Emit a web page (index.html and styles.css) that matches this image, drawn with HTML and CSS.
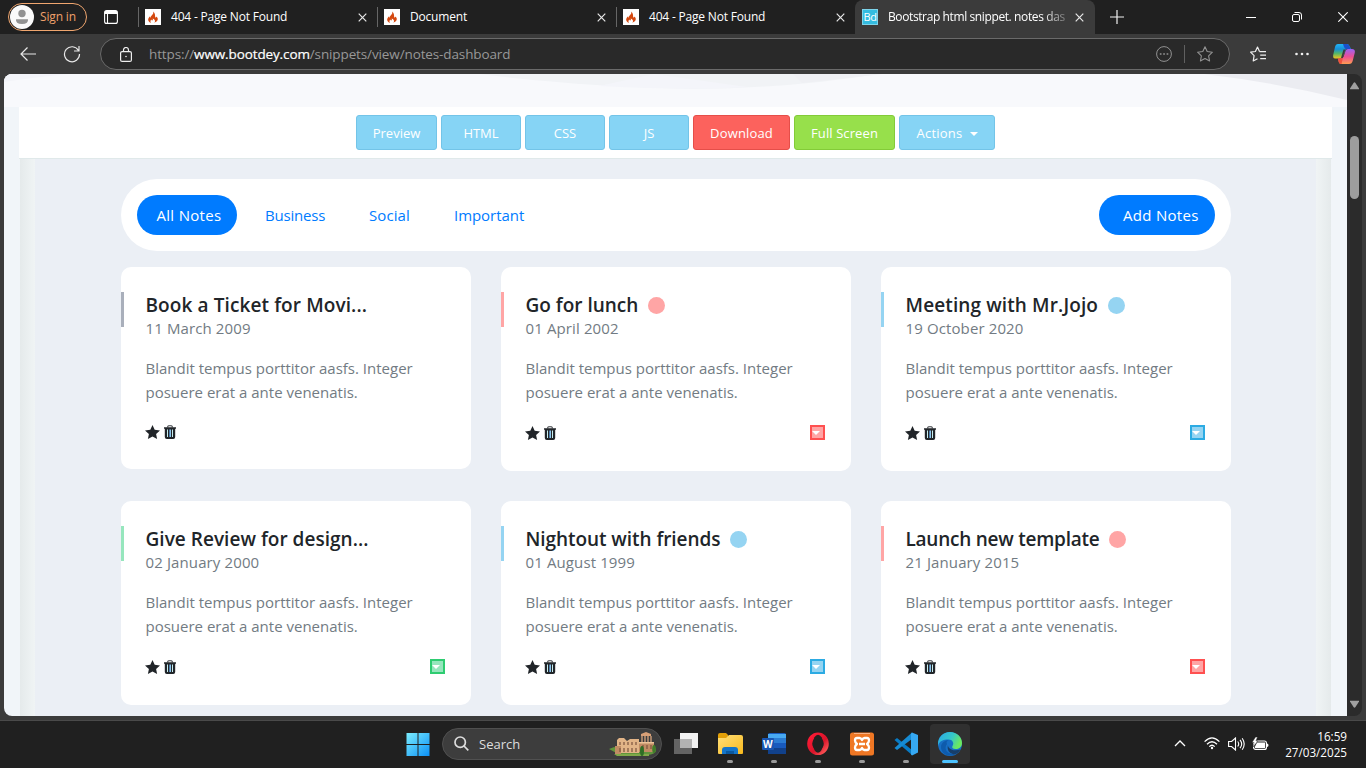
FILE: index.html
```
<!DOCTYPE html>
<html lang="en">
<head>
<meta charset="utf-8">
<title>Notes dashboard</title>
<link rel="stylesheet" href="styles.css">
</head>
<body>
<svg width="0" height="0" class="defs">
  <defs>
    <linearGradient id="winG" gradientUnits="userSpaceOnUse" x1="0" y1="0" x2="24" y2="24"><stop offset="0" stop-color="#7ff0ff"/><stop offset="1" stop-color="#0a8ff5"/></linearGradient>
    <linearGradient id="copA" x1="0" y1="0" x2="0" y2="1"><stop offset="0" stop-color="#23b5f5"/><stop offset=".35" stop-color="#168fd8"/><stop offset=".65" stop-color="#54b768"/><stop offset="1" stop-color="#f2c51d"/></linearGradient>
    <linearGradient id="copB" x1="0" y1="0" x2="0" y2="1"><stop offset="0" stop-color="#9a63f4"/><stop offset=".5" stop-color="#ea4e96"/><stop offset="1" stop-color="#ff9c50"/></linearGradient>
    <linearGradient id="edgeA" x1="0" y1="0" x2="1" y2=".4"><stop offset="0" stop-color="#2aa8e8"/><stop offset=".6" stop-color="#35c8c8"/><stop offset="1" stop-color="#6be860"/></linearGradient>
    <linearGradient id="operaG" x1="0" y1="0" x2="1" y2="1"><stop offset="0" stop-color="#ff1b36"/><stop offset=".6" stop-color="#d9142a"/><stop offset="1" stop-color="#ff5a5a"/></linearGradient>
    <linearGradient id="foldG" x1="0" y1="0" x2="1" y2="1"><stop offset="0" stop-color="#ffe07a"/><stop offset="1" stop-color="#f9b91c"/></linearGradient>
    <symbol id="flame" viewBox="0 0 16 16"><rect width="16" height="16" fill="#fff"/><path d="M8.200 2.500c.5 1.700-.3 2.700-1.500 3.900-.8.800-1 1.500-.7 2.300-.6-.2-.9-.8-.8-1.500C4 8.200 3 9.400 3.200 10.900c.2 1.400 1.300 2.400 2.800 2.800-.9-1.200-.7-2.400.5-3.200 0 1 .6 1.200 1 .8.600-.5.400-1.300.2-1.900 1.500.6 2.500 1.500 2.300 2.800 0 .6-.3 1.100-.8 1.500 2.200-.4 3.600-1.800 3.600-3.600 0-1.300-.8-2.200-1.600-2.700.1.700-.2 1.200-.7 1.200C9.700 8.300 11 5.200 8.200 2.500Z" fill="#d4480f"/></symbol>
    <symbol id="close" viewBox="0 0 9 9"><path d="M.7.7l7.600 7.600M8.300.7L.7 8.300" stroke="#e8e8e8" stroke-width="1.200" fill="none"/></symbol>
    <symbol id="star" viewBox="0 0 15 14"><path d="M7.500 0l2.200 4.700 5.300.7-3.900 3.500 1 5.100-4.600-2.500L2.900 14l1-5.100L0 5.400l5.300-.7Z" fill="#212529"/></symbol>
    <symbol id="trash" viewBox="0 0 12 14"><path d="M3.700 2.500V1.700Q3.700.7 4.700.7h2.600q1 0 1 1v.8" fill="none" stroke="#3b3f43" stroke-width="1.100"/><path d="M0 2.300h12v1.400h-.8V12q0 2-2 2H2.800q-2 0-2-2V3.700H0Z" fill="#212529"/><path d="M3.500 4.500v7.500M8.500 4.500v7.500" stroke="#c7eef0"/><path d="M5.500 4.500v7.500" stroke="#4d7fae"/><path d="M6.500 4.500v7.500" stroke="#8bc4ec"/></symbol>
  </defs>
</svg>

<div class="tabstrip">
  <div class="signin"><svg width="24" height="24" viewBox="0 0 24 24"><circle cx="12" cy="12" r="12" fill="#fafafa"/><circle cx="12" cy="8.500" r="3.700" fill="#929292"/><path d="M6 14.200h12q.7 4.700-6 4.700t-6-4.700Z" fill="#929292"/></svg><span>Sign in</span></div>
  <svg class="workspace" width="14" height="14" viewBox="0 0 14 14" fill="none" stroke="#fff" stroke-width="1.100"><rect x=".6" y=".6" width="12.800" height="12.800" rx="2"/><path d="M.6 3.400h12.800M3.500 3.400v10"/><path d="M1 2h12" stroke-width="2"/></svg>
  <div class="tab"><svg width="16" height="16"><use href="#flame"/></svg><span class="tab-name">404 - Page Not Found</span><svg width="9" height="9"><use href="#close"/></svg></div>
  <div class="tab"><svg width="16" height="16"><use href="#flame"/></svg><span class="tab-name">Document</span><svg width="9" height="9"><use href="#close"/></svg></div>
  <div class="tab"><svg width="16" height="16"><use href="#flame"/></svg><span class="tab-name">404 - Page Not Found</span><svg width="9" height="9"><use href="#close"/></svg></div>
  <div class="tab tab-active"><span class="bd">Bd</span><span class="tab-name tab-long">Bootstrap html snippet. notes das</span><svg width="9" height="9"><use href="#close"/></svg></div>
  <svg class="newtab" width="14" height="14" viewBox="0 0 14 14"><path d="M7 0v14M0 7h14" stroke="#f2f2f2" stroke-width="1.200"/></svg>
  <div class="winctl">
    <svg width="10" height="10" viewBox="0 0 10 10"><path d="M0 5.500h10" stroke="#fff"/></svg>
    <svg width="10" height="10" viewBox="0 0 10 10" fill="none" stroke="#fff"><rect x=".5" y="2.500" width="7" height="7" rx="1.500"/><path d="M2.500.5H7q2.500 0 2.500 2.500v4.500"/></svg>
    <svg width="10" height="10" viewBox="0 0 10 10"><path d="M.3.300l9.400 9.400M9.700.300L.3 9.700" stroke="#fff" stroke-width="1.100"/></svg>
  </div>
</div>

<div class="toolbar">
  <svg class="back" width="17" height="14" viewBox="0 0 17 14" fill="none" stroke="#e8e8e8" stroke-width="1.200"><path d="M16 7H1M7.500.5L1 7l6.500 6.500"/></svg>
  <svg class="reload" width="18" height="18" viewBox="0 0 18 18" fill="none" stroke="#e8e8e8" stroke-width="1.200"><path d="M15.500 5.500A7.500 7.500 0 1 0 16.500 9M16 1v5h-5"/></svg>
  <div class="address">
    <svg width="12" height="15" viewBox="0 0 12 15" fill="none" stroke="#eee" stroke-width="1.200"><rect x=".6" y="4.600" width="10.800" height="9.800" rx="1.500"/><path d="M3.500 4.600V3a2.500 2.500 0 0 1 5 0v1.600"/><circle cx="6" cy="9.500" r=".8" fill="#eee" stroke="none"/></svg>
    <span class="url">https://<b>www.bootdey.com</b>/snippets/view/notes-dashboard</span>
    <svg width="16" height="16" viewBox="0 0 16 16" fill="none" stroke="#929292"><circle cx="8" cy="8" r="7.400"/><path d="M3.800 8h1.700M7.200 8h1.700M10.600 8h1.700" stroke-width="1.600"/></svg>
    <i class="divider"></i>
    <svg width="16" height="16" viewBox="0 0 16 16" fill="none" stroke="#929292" stroke-width="1.100" stroke-linejoin="round"><path d="M8 .8l2.200 4.700 5.200.7-3.800 3.600 1 5.200L8 12.500 3.400 15l1-5.200L.6 6.200l5.200-.7Z"/></svg>
  </div>
  <svg class="favs" width="16" height="16" viewBox="0 0 16 16" fill="none" stroke="#eee" stroke-width="1.200" stroke-linejoin="round"><path d="M9.500 5.600L7.500 1 5.400 5.500.6 6.200l3.500 3.500-.9 5.300L7.500 12.700M9.500 5.600H16M10.200 9.200H16M10.200 12.700H16"/></svg>
  <svg class="dots" width="14" height="4" viewBox="0 0 14 4" fill="#f0f0f0"><circle cx="1.500" cy="2" r="1.300"/><circle cx="7" cy="2" r="1.300"/><circle cx="12.500" cy="2" r="1.300"/></svg>
  <svg class="copilot" width="22" height="20" viewBox="0 0 22 20"><path d="M5 0h9q2 0 2.700 2.500L18 5h-5l-3 7q-1 2.500-3.500 2.500H2Q-.4 14.500.2 11L2 3Q2.700 0 5 0Z" fill="url(#copA)"/><path d="M10 0h4q2 0 2.700 2.500L17.500 5h-5L11 3Z" fill="#1b50cb"/><path d="M15 5h4q3.600 0 2.700 4l-1.900 7.500Q19 20 16 20H8q-2 0-2.500-3L5 14.500h3q2 0 2.700-2L12.500 7q.6-2 2.500-2Z" fill="url(#copB)"/><path d="M5 14.500h3q1.200 0 2-1L8.500 20H8q-2 0-2.500-3Z" fill="#f0513c"/><path d="M10.500 5.500h2L9.500 14H8Z" fill="#3b3b3b"/></svg>
</div>

<div class="viewport">
  <main class="page">
    <svg class="waves" width="1343" height="33" viewBox="0 0 1343 33"><rect width="1343" height="33" fill="#f8f9fc"/><path d="M0 0h65Q25 4 0 8Z" fill="#f3f4f9"/><path d="M475 0Q570 12 690 15Q790 14 874 0Z" fill="#f1f3f6"/><path d="M650 0L595 12Q690 17 743 13Z" fill="#f4f5fa"/><path d="M789 0h90L798 9Z" fill="#eff0f4"/><path d="M1200 0h143v26Q1275 9 1200 0Z" fill="#ebecf1"/></svg>
    <div class="switcher">
      <a class="btn w81">Preview</a><a class="btn w80">HTML</a><a class="btn w80">CSS</a><a class="btn w80">JS</a><a class="btn red">Download</a><a class="btn green">Full Screen</a><a class="btn actions">Actions<i class="caret"></i></a>
    </div>
    <div class="demo">
      <div class="container">
        <nav class="pills"><a class="pill on">All Notes</a><a class="pill biz">Business</a><a class="pill soc">Social</a><a class="pill imp">Important</a><a class="pill on add">Add Notes</a></nav>
        <div class="cards">
          <article class="card gray"><h5><span class="t1">Book a Ticket for Movi...</span></h5><p class="date">11 March 2009</p><p class="text">Blandit tempus porttitor aasfs. Integer<br>posuere erat a ante venenatis.</p><footer class="short"><svg width="15" height="14"><use href="#star"/></svg><svg width="12" height="14"><use href="#trash"/></svg></footer></article>
          <article class="card red-note"><h5><span class="t2">Go for lunch</span><i class="dot"></i></h5><p class="date">01 April 2002</p><p class="text">Blandit tempus porttitor aasfs. Integer<br>posuere erat a ante venenatis.</p><footer><svg width="15" height="14"><use href="#star"/></svg><svg width="12" height="14"><use href="#trash"/></svg><i class="menu"></i></footer></article>
          <article class="card blue-note"><h5><span class="t3">Meeting with Mr.Jojo</span><i class="dot"></i></h5><p class="date">19 October 2020</p><p class="text">Blandit tempus porttitor aasfs. Integer<br>posuere erat a ante venenatis.</p><footer><svg width="15" height="14"><use href="#star"/></svg><svg width="12" height="14"><use href="#trash"/></svg><i class="menu"></i></footer></article>
          <article class="card green-note"><h5><span class="t4">Give Review for design...</span></h5><p class="date">02 January 2000</p><p class="text">Blandit tempus porttitor aasfs. Integer<br>posuere erat a ante venenatis.</p><footer><svg width="15" height="14"><use href="#star"/></svg><svg width="12" height="14"><use href="#trash"/></svg><i class="menu"></i></footer></article>
          <article class="card blue-note"><h5><span class="t5">Nightout with friends</span><i class="dot"></i></h5><p class="date">01 August 1999</p><p class="text">Blandit tempus porttitor aasfs. Integer<br>posuere erat a ante venenatis.</p><footer><svg width="15" height="14"><use href="#star"/></svg><svg width="12" height="14"><use href="#trash"/></svg><i class="menu"></i></footer></article>
          <article class="card red-note"><h5><span class="t6">Launch new template</span><i class="dot"></i></h5><p class="date">21 January 2015</p><p class="text">Blandit tempus porttitor aasfs. Integer<br>posuere erat a ante venenatis.</p><footer><svg width="15" height="14"><use href="#star"/></svg><svg width="12" height="14"><use href="#trash"/></svg><i class="menu"></i></footer></article>
        </div>
      </div>
    </div>
  </main>
  <div class="scrollbar"><svg width="9" height="8" viewBox="0 0 9 8"><path d="M3.500 1q1-1.500 2 0L9 6.500v.8H0v-.8Z" fill="#a0a0a0"/></svg><i class="thumb"></i><svg class="down" width="9" height="8" viewBox="0 0 9 8"><path d="M0 .7h9v.8L5.500 7q-1 1.500-2 0L0 1.500Z" fill="#a0a0a0"/></svg></div>
</div>

<div class="taskbar">
  <div class="start"><svg width="24" height="24" viewBox="0 0 24 24"><path d="M.5 1h11v11H.5ZM12.500 1h11v11h-11ZM.5 13h11v11H.5ZM12.500 13h11v11h-11Z" fill="url(#winG)"/></svg></div>
  <div class="search">
    <svg width="15" height="15" viewBox="0 0 15 15" fill="none" stroke="#ddd" stroke-width="1.700"><circle cx="6.200" cy="6.200" r="5.200"/><path d="M10 10l4.300 4.300"/></svg><span>Search</span>
    <svg class="castle" width="48" height="24" viewBox="0 0 48 24"><path d="M0 17q8-4 16-1l30-1q4 7-8 8H11Z" fill="#61953c"/><path d="M8 8l2-2h5l3 3 3-2h9v14H8Z" fill="#e2b487"/><path d="M6 14h6v8H6ZM30 10h15v10H30Z" fill="#c08c64"/><path d="M32 2l5-2 5 2v2H32Z" fill="#d8a077"/><path d="M33 4v6M36 4v6M39 4v6M42 4v6" stroke="#d7a57e" stroke-width="1.300"/><path d="M30 10h15v1.500H30Z" fill="#edc49a"/><path d="M11 10v3M15 10v3M19 10v3M23 10v3M27 10v3M11 16v4M15 16v4M19 16v4M23 16v4M27 16v4M34 13v4M38 13v4M42 13v4" stroke="#7c543e" stroke-width="1.200"/><path d="M5 22h35v2H8Z" fill="#7fa849"/><ellipse cx="33" cy="19" rx="2" ry="5" fill="#2f6e25"/><ellipse cx="45" cy="17" rx="1.800" ry="4" fill="#407c2a"/></svg>
  </div>
  <div class="apps">
    <div class="app noind"><svg width="24" height="24" viewBox="0 0 24 24"><path d="M0 7h18v15H0Z" fill="#646464"/><path d="M6 1h18v15H6Z" fill="#f2f2f2"/><path d="M6 7h12v9H6Z" fill="#b3b3b3"/></svg></div>
    <div class="app"><svg width="25" height="24" viewBox="0 0 25 24"><path d="M0 3q0-2 2-2h6l2 2v4H0Z" fill="#e3a008"/><path d="M0 6h8l3-3h12q2 0 2 2v16q0 1-1 1H1q-1 0-1-1Z" fill="url(#foldG)"/><path d="M4 22v-4q0-3 3-3h10q3 0 3 3v4Z" fill="#1475c9"/><path d="M8 19h8v3H8Z" fill="#0a589f"/></svg></div>
    <div class="app"><svg width="24" height="24" viewBox="0 0 24 24"><rect x="6" y="1" width="18" height="21" rx="1.500" fill="#185abd"/><path d="M6 2h18v4H6Z" fill="#48a9f1"/><path d="M6 6h18v5H6Z" fill="#2b7cd3"/><path d="M6 16h18v6H6Z" fill="#11418b"/><rect y="6" width="12" height="12" rx="1" fill="#1956b2"/><text x="1" y="15.500" class="w">W</text></svg></div>
    <div class="app"><svg width="24" height="24" viewBox="0 0 24 24"><ellipse cx="12" cy="11.700" rx="8.300" ry="8.800" fill="none" stroke="url(#operaG)" stroke-width="5"/><ellipse cx="12" cy="11.700" rx="5" ry="9" fill="#202020"/></svg></div>
    <div class="app"><svg width="24" height="24" viewBox="0 0 24 24"><rect width="24" height="23" y=".5" rx="2.500" fill="#ef7724"/><path d="M4 1h16v1H4Z" fill="#f9b285"/><path d="M7 6h2.500Q11 6 12 8q1-2 2.500-2H17q2 0 2 2.500 0 2-2 3.500 2 1.500 2 3.500Q19 18 17 18h-2.500Q13 18 12 16q-1 2-2.500 2H7q-2 0-2-2.500 0-2 2-3.500-2-1.500-2-3.500Q5 6 7 6ZM9 12h6" fill="none" stroke="#fff" stroke-width="2.300" stroke-linejoin="round"/></svg></div>
    <div class="app"><svg width="25" height="24" viewBox="0 0 25 24"><path d="M.5 8L3 6l15 12v5Z" fill="#087bc5"/><path d="M.5 16L3 18 18 7V.500Z" fill="#168bd3"/><path d="M18 .5l6 2.500v17.500L18 23.500l-1-1V1.500Z" fill="#36a9f3"/></svg></div>
    <div class="app current"><svg width="24" height="24" viewBox="0 0 24 24"><circle cx="12" cy="12" r="12" fill="#176fc5"/><path d="M0 12C0 5 5 0 12 0s12 5 12 11c0 4-3 6-6.500 6-3 0-4-1.500-3-3 2-3 0-6.500-4-6.500C5 7.500 1 9 0 14Z" fill="url(#edgeA)"/><path d="M9 12c-4 5 1 11 8 10-6 4-14 0-14-7 0-4 4-7 8-7-2 1-3 2-2 4Z" fill="#0e5bac"/><path d="M10 12c-1 4 4 8 12.500 5.500Q20 22 16 22.500 8 21 10 12Z" fill="#173e69"/></svg></div>
  </div>
  <div class="tray">
    <svg width="12" height="7" viewBox="0 0 12 7"><path d="M1 6l5-5 5 5" fill="none" stroke="#fff" stroke-width="1.300"/></svg>
    <svg class="wifi" width="16" height="13" viewBox="0 0 16 13" fill="none" stroke="#fff" stroke-width="1.300"><path d="M.6 4.600Q8-2.800 15.400 4.600M3 7.200q5-4.800 10 0M5.300 9.600q2.700-2.600 5.400 0"/><circle cx="8" cy="11" r="1.200" fill="#fff" stroke="none"/></svg>
    <svg class="sound" width="17" height="14" viewBox="0 0 17 14" fill="none" stroke="#fff" stroke-width="1.100"><path d="M.6 4.500h3L7.500 1v12L3.600 9.500h-3ZM9.700 4.500q2 2.500 0 5M12 2.800q3.400 4.200 0 8.400M14.200 1.200q4 5.800 0 11.600"/></svg>
    <svg class="battery" width="17" height="14" viewBox="0 0 17 14"><rect x="1.600" y="4" width="12.800" height="8.400" rx="2" fill="none" stroke="#fff" stroke-width="1.200"/><path d="M5 5.500h8v5.500H3V9.500ZM15 6.500q1.500 0 1.500 1.700T15 10Z" fill="#fff"/><path d="M3.500 0L0 5.500h2L1 10l5-6H4l1.500-4Z" fill="#fff" stroke="#202020" stroke-width=".5"/></svg>
    <div class="clock"><span class="time">16:59</span><span>27/03/2025</span></div>
  </div>
</div>
</body>
</html>
```
FILE: styles.css
```
* { box-sizing: border-box; }
body { margin: 0; width: 1366px; height: 768px; overflow: hidden; background: #3b3b3b; font-family: "Open Sans", "Noto Sans", sans-serif; display: flex; flex-direction: column; }
svg { display: block; flex: none; }
.defs { position: absolute; }
p, h5 { margin: 0; }

.tabstrip { height: 34px; flex: none; background: #202020; display: flex; align-items: center; }
.signin { width: 79px; height: 28px; margin-left: 8px; border: 1px solid #f0a66f; border-radius: 14px; padding: 0 0 1px 1px; display: flex; align-items: center; gap: 6px; color: #efa16b; font-size: 12px; letter-spacing: -.15px; white-space: nowrap; }
.workspace { margin: 0 20px 0 17px; }
.tab { width: 239px; height: 20px; border-left: 1px solid #666; padding: 0 10px 0 6px; display: flex; align-items: center; color: #fff; font-size: 12px; letter-spacing: -.19px; white-space: nowrap; }
.tab-name { flex: 1; margin-left: 10px; line-height: 20px; }
.tab-active { width: 240px; height: 34px; background: #3b3b3b; border: 0; border-radius: 8px 8px 0 0; padding: 0 11px 0 7px; }
.tab-long { letter-spacing: -.39px; -webkit-mask-image: linear-gradient(90deg, #000 154px, rgba(0,0,0,.2) 180px); mask-image: linear-gradient(90deg, #000 154px, rgba(0,0,0,.2) 180px); }
.bd { width: 16px; height: 16px; background: #34bce0; border: 1px solid #7ed4ea; font-size: 11px; line-height: 14px; text-align: center; letter-spacing: -.3px; }
.newtab { margin-left: 15px; }
.winctl { margin-left: auto; margin-right: 18px; display: flex; gap: 36px; }

.toolbar { height: 40px; flex: none; background: #3b3b3b; display: flex; align-items: center; }
.back { margin-left: 20px; }
.reload { margin-left: 26px; }
.address { width: 1130px; height: 32px; margin-left: 19px; background: #292929; border: 1px solid #6a6a6a; border-radius: 16px; padding: 0 16px 0 19px; display: flex; align-items: center; }
.url { flex: 1; margin-left: 17px; color: #989898; font-size: 13.5px; letter-spacing: -.12px; white-space: nowrap; }
.url b { color: #fff; font-weight: 400; -webkit-text-stroke: .2px #fff; }
.divider { width: 1px; height: 18px; background: #606060; margin: 0 12px; }
.favs { margin-left: 20px; }
.dots { margin-left: 29px; }
.copilot { margin-left: 24px; }

.viewport { width: 1358px; height: 642px; margin-left: 4px; flex: none; display: flex; border-radius: 8px; overflow: hidden; background: #2b2b2b; }
.page { width: 1343px; background: #f1f5f9; display: flex; flex-direction: column; }
.scrollbar { width: 15px; padding-top: 8px; display: flex; flex-direction: column; align-items: center; }
.thumb { width: 9px; height: 63px; margin-top: 46px; border-radius: 5px; background: #9d9d9d; }
.down { margin-top: auto; margin-bottom: 8px; }
.switcher { height: 52px; flex: none; margin: 0 15px; background: #fff; border-bottom: 1px solid #e0e9ea; display: flex; justify-content: center; gap: 4px; padding-top: 8px; }
.btn { height: 35px; border: 1px solid #73c4e8; border-radius: 3px; background: #86d4f5; color: #fff; font-size: 13px; letter-spacing: 0; line-height: 34px; text-align: center; white-space: nowrap; }
.w81 { width: 81px; }
.w80 { width: 80px; }
.red { width: 97px; letter-spacing: .15px; background: #fc625d; border-color: #e54e49; }
.green { width: 101px; letter-spacing: .1px; background: #97e04b; border-color: #83cb38; }
.actions { width: 96px; display: flex; align-items: center; justify-content: center; gap: 7px; letter-spacing: .25px; }
.caret { border: 4px solid transparent; border-top-color: #fff; border-bottom: 0; margin-top: 2px; }
.demo { flex: 1; min-height: 0; margin: 0 16px; border: solid transparent; border-width: 0 15px; background: linear-gradient(#ebeff5, #ebeff5) padding-box, linear-gradient(90deg, #e5eaeb 0, #f0f4f5 15px, #f0f4f5 1296px, #e5eaeb 1311px) border-box; overflow: hidden; }
.container { width: 1110px; margin: 20px 0 0 86px; }
.pills { height: 72px; background: #fff; border-radius: 36px; padding: 16px; display: flex; }
.pill { height: 40px; line-height: 41px; color: #007bff; font-size: 15px; letter-spacing: -.05px; white-space: nowrap; }
.on { width: 100px; padding-left: 19.500px; background: #007bff; color: #fff; border-radius: 20px; letter-spacing: .3px; }
.biz { width: 60px; margin-left: 28px; letter-spacing: -.2px; }
.soc { width: 42px; margin-left: 44px; letter-spacing: .1px; }
.imp { margin-left: 43px; }
.add { width: 116px; padding-left: 24px; margin-left: auto; }
.cards { margin-top: 16px; display: grid; grid-template-columns: repeat(3, 350px); gap: 30px; align-items: start; }
.card { position: relative; background: #fff; border-radius: 10px; padding: 25px 26px 25px 24.5px; --c: #a9afbb; --b: #a9afbb; }
.card::before { content: ""; position: absolute; left: 0; top: 25px; width: 3px; height: 35px; background: var(--c); }
.red-note { --c: #ffa5a5; --b: #ff5050; }
.blue-note { --c: #95d4f2; --b: #2cabe3; }
.green-note { --c: #96e6bd; --b: #2ecc71; }
.card h5 { height: 24px; padding-top: 1px; font-size: 19px; font-weight: 600; color: #212529; display: flex; align-items: center; gap: 9.5px; white-space: nowrap; }
.t1 { letter-spacing: .1px; }
.t3 { letter-spacing: .12px; }
.t4 { letter-spacing: .03px; }
.t5 { letter-spacing: -.06px; }
.t6 { letter-spacing: -.24px; }
.dot { width: 17px; height: 17px; margin-top: 1px; border-radius: 50%; background: var(--c); }
.date, .text { color: #727b83; font-size: 15px; line-height: 24px; letter-spacing: 0; white-space: nowrap; }
.date { height: 24px; margin-bottom: 16px; letter-spacing: .12px; }
.card footer { height: 26px; margin: 16px 0 0 -.5px; display: flex; align-items: center; gap: 4px; }
.card .short { height: 24px; }
.menu { width: 15px; height: 15px; margin-left: auto; margin-top: -1px; border: 2px solid var(--b); background: var(--c); padding: 4px 0 0 0; }
.menu::before { content: ""; display: block; width: 8px; height: 4px; background: #fff; clip-path: polygon(0 0, 100% 0, 50% 100%); }

.taskbar { height: 48px; flex: none; margin-top: 4px; padding-bottom: 2px; background: #202020; border-top: 1px solid #4a4a4a; display: flex; align-items: center; }
.start { margin-left: 405.5px; }
.search { width: 220px; height: 32px; margin-left: 12.5px; padding: 0 4px 0 11px; background: #3d3d3d; border: 1px solid #505050; border-radius: 16px; display: flex; align-items: center; gap: 10px; color: #dedede; font-size: 13px; }
.castle { margin-left: auto; }
.apps { display: flex; margin-left: 4px; gap: 4px; }
.app { width: 40px; height: 40px; border-radius: 4px; display: flex; flex-direction: column; align-items: center; padding-top: 8px; }
.app::after { content: ""; width: 6px; height: 3px; border-radius: 2px; background: #9a9a9a; margin-top: 4px; }
.noind::after { display: none; }
.current { background: #303030; }
.current::after { width: 16px; background: #4cc2ff; }
.w { font: 700 10px "Open Sans", sans-serif; fill: #fff; }
.tray { margin-left: auto; margin-right: 19px; display: flex; align-items: center; }
.wifi { margin-left: 18px; }
.sound { margin-left: 8px; }
.battery { margin-left: 7px; }
.clock { width: 78px; display: flex; flex-direction: column; align-items: flex-end; color: #fff; font-size: 11.7px; line-height: 16px; letter-spacing: -.02px; }
```
